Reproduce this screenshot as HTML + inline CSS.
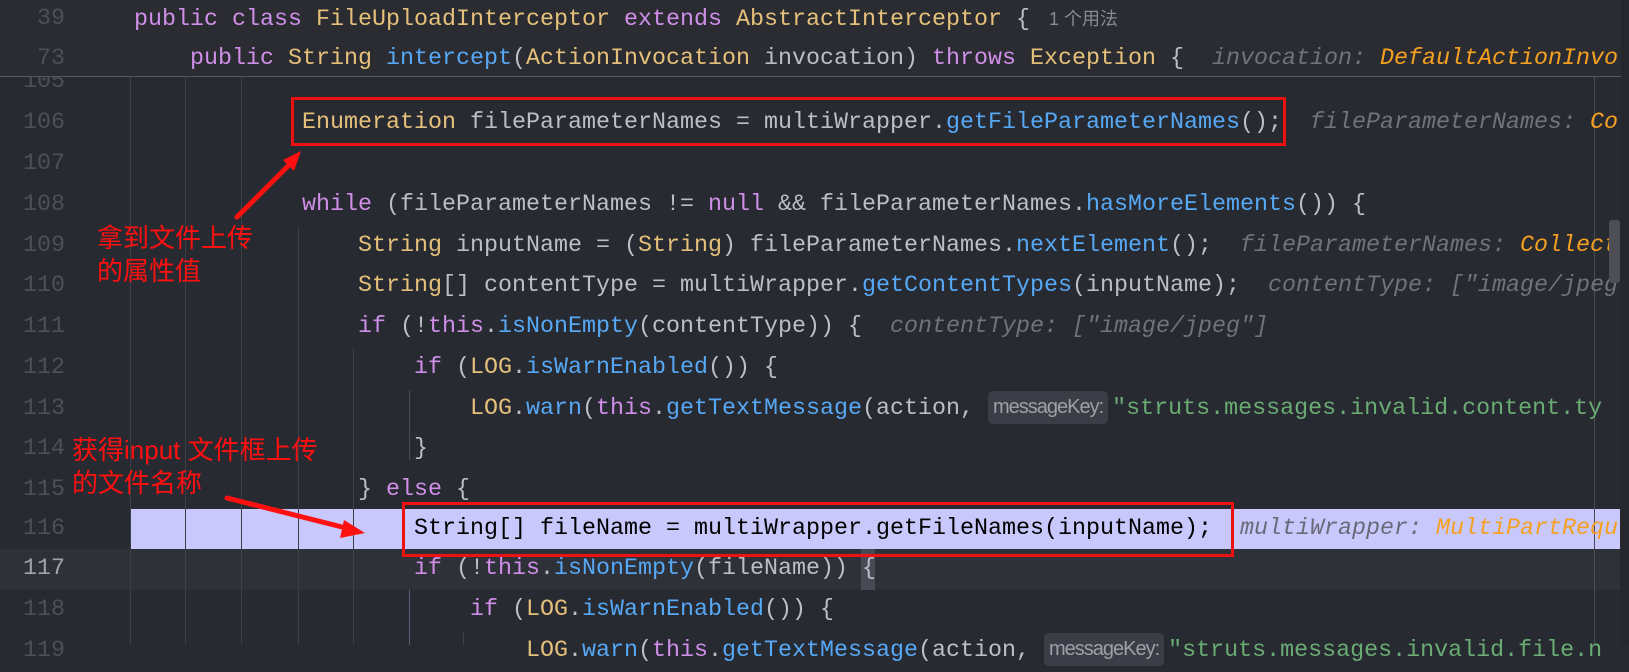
<!DOCTYPE html>
<html><head><meta charset="utf-8"><style>
*{margin:0;padding:0;box-sizing:border-box}
body{width:1629px;height:645px;overflow:hidden;background:#282a31;position:relative;font-family:"Liberation Mono",monospace;font-size:23.33px;color:#bcbec4}
.n{position:absolute;right:1564px;width:60px;text-align:right;color:#4b5059;white-space:pre;line-height:40.75px;height:40.75px}
.c{position:absolute;white-space:pre}
.k{color:#cf8ee8}.t{color:#e5c07b}.m{color:#56a8f5}.s{color:#6aab73}
.h{color:#6f737a;font-style:italic}.o{color:#f5a020;font-style:italic}
.g{position:absolute;width:1px;background:#3c3f46}
.pill{display:inline-block;background:#3b3e46;color:#9da0a8;font-family:"Liberation Sans",sans-serif;font-size:20px;border-radius:5px;padding:0 5px;line-height:33px;height:33px;vertical-align:middle;margin-right:4px;letter-spacing:-1px}
.box{position:absolute;border:3px solid #ee1111}
.ann{position:absolute;color:#ff1010;font-family:"Liberation Sans","Noto Sans CJK SC",sans-serif;font-size:26px;line-height:33px;white-space:pre}
</style></head><body>

<div style="position:absolute;left:0;top:549px;width:1620px;height:41px;background:#2f3139"></div>
<div style="position:absolute;left:130px;top:509px;width:1490px;height:40px;background:#c8c8fc"></div>
<div style="position:absolute;left:861px;top:549px;width:14px;height:41px;background:#464a55"></div>

<div class="g" style="left:130px;top:77px;height:568px"></div>
<div class="g" style="left:185px;top:77px;height:568px"></div>
<div class="g" style="left:241px;top:77px;height:568px"></div>
<div class="g" style="left:298px;top:226px;height:419px"></div>
<div class="g" style="left:353px;top:348px;height:297px"></div>
<div class="g" style="left:409px;top:390px;height:70px;background:#4a4d57"></div>
<div class="g" style="left:409px;top:590px;height:55px;background:#58607a"></div>
<div class="g" style="left:463px;top:632px;height:13px"></div>
<div class="g" style="left:1594px;top:77px;height:568px;background:#4a4c52"></div>

<div class="n" style="top:62px">105</div>
<div class="n" style="top:103px">106</div>
<div class="c" style="left:302px;top:103px;line-height:40.75px"><span class="t">Enumeration</span> fileParameterNames = multiWrapper.<span class="m">getFileParameterNames</span>();  <span class="h">fileParameterNames: </span><span class="o">Co</span></div>
<div class="n" style="top:144px">107</div>
<div class="n" style="top:185px">108</div>
<div class="c" style="left:302px;top:185px;line-height:40.75px"><span class="k">while</span> (fileParameterNames != <span class="k">null</span> &amp;&amp; fileParameterNames.<span class="m">hasMoreElements</span>()) {</div>
<div class="n" style="top:226px">109</div>
<div class="c" style="left:358px;top:226px;line-height:40.75px"><span class="t">String</span> inputName = (<span class="t">String</span>) fileParameterNames.<span class="m">nextElement</span>();  <span class="h">fileParameterNames: </span><span class="o">Collect</span></div>
<div class="n" style="top:266px">110</div>
<div class="c" style="left:358px;top:266px;line-height:40.75px"><span class="t">String</span>[] contentType = multiWrapper.<span class="m">getContentTypes</span>(inputName);  <span class="h">contentType: ["image/jpeg</span></div>
<div class="n" style="top:307px">111</div>
<div class="c" style="left:358px;top:307px;line-height:40.75px"><span class="k">if</span> (!<span class="k">this</span>.<span class="m">isNonEmpty</span>(contentType)) {  <span class="h">contentType: ["image/jpeg"]</span></div>
<div class="n" style="top:348px">112</div>
<div class="c" style="left:414px;top:348px;line-height:40.75px"><span class="k">if</span> (<span class="t">LOG</span>.<span class="m">isWarnEnabled</span>()) {</div>
<div class="n" style="top:389px">113</div>
<div class="c" style="left:470px;top:389px;line-height:40.75px"><span class="t">LOG</span>.<span class="m">warn</span>(<span class="k">this</span>.<span class="m">getTextMessage</span>(action, <span class="pill">messageKey:</span><span class="s">"struts.messages.invalid.content.ty</span></div>
<div class="n" style="top:429px">114</div>
<div class="c" style="left:414px;top:429px;line-height:40.75px">}</div>
<div class="n" style="top:470px">115</div>
<div class="c" style="left:358px;top:470px;line-height:40.75px">} <span class="k">else</span> {</div>
<div class="n" style="top:509px">116</div>
<div class="c" style="left:414px;top:509px;line-height:40.75px;color:#000">String[] fileName = multiWrapper.getFileNames(inputName);  <span class="h" style="color:#6a6a7a">multiWrapper: </span><span class="o">MultiPartRequ</span></div>
<div class="n" style="top:549px;color:#a1a3ab">117</div>
<div class="c" style="left:414px;top:549px;line-height:40.75px"><span class="k">if</span> (!<span class="k">this</span>.<span class="m">isNonEmpty</span>(fileName)) {</div>
<div class="n" style="top:590px">118</div>
<div class="c" style="left:470px;top:590px;line-height:40.75px"><span class="k">if</span> (<span class="t">LOG</span>.<span class="m">isWarnEnabled</span>()) {</div>
<div class="n" style="top:631px">119</div>
<div class="c" style="left:526px;top:631px;line-height:40.75px"><span class="t">LOG</span>.<span class="m">warn</span>(<span class="k">this</span>.<span class="m">getTextMessage</span>(action, <span class="pill">messageKey:</span><span class="s">"struts.messages.invalid.file.n</span></div>

<div style="position:absolute;left:0;top:0;width:1621px;height:77px;background:#2a2c32;border-bottom:1px solid #55575c"></div>
<div class="n" style="top:-1px">39</div>
<div class="c" style="left:134px;top:-1px;line-height:40px"><span class="k">public class</span> <span class="t">FileUploadInterceptor</span> <span class="k">extends</span> <span class="t">AbstractInterceptor</span> { <span style="font-family:'Liberation Sans','Noto Sans CJK SC',sans-serif;font-size:18px;color:#868a91"> 1 个用法</span></div>
<div class="n" style="top:39px">73</div>
<div class="c" style="left:190px;top:39px;line-height:40px"><span class="k">public</span> <span class="t">String</span> <span class="m">intercept</span>(<span class="t">ActionInvocation</span> invocation) <span class="k">throws</span> <span class="t">Exception</span> {  <span class="h">invocation: </span><span class="o">DefaultActionInvo</span></div>

<div style="position:absolute;left:1621px;top:0;width:8px;height:645px;background:#25272c"></div>
<div style="position:absolute;left:1609px;top:220px;width:11px;height:63px;background:#4d4f55;border-radius:3px"></div>

<div class="box" style="left:291px;top:97px;width:995px;height:49px"></div>
<div class="box" style="left:402px;top:502px;width:832px;height:55px"></div>

<div class="ann" style="left:97px;top:222px">拿到文件上传
的属性值</div>
<div class="ann" style="left:72px;top:434px">获得input 文件框上传
的文件名称</div>

<svg style="position:absolute;left:0;top:0" width="1629" height="645">
<line x1="237" y1="217" x2="292" y2="162" stroke="#ff1010" stroke-width="5" stroke-linecap="round"/>
<polygon points="301,151 283,160 294,171" fill="#ff1010"/>
<line x1="227" y1="498" x2="350" y2="529" stroke="#ff1010" stroke-width="5" stroke-linecap="round"/>
<polygon points="365,533 344,520 340,538" fill="#ff1010"/>
</svg>
</body></html>
